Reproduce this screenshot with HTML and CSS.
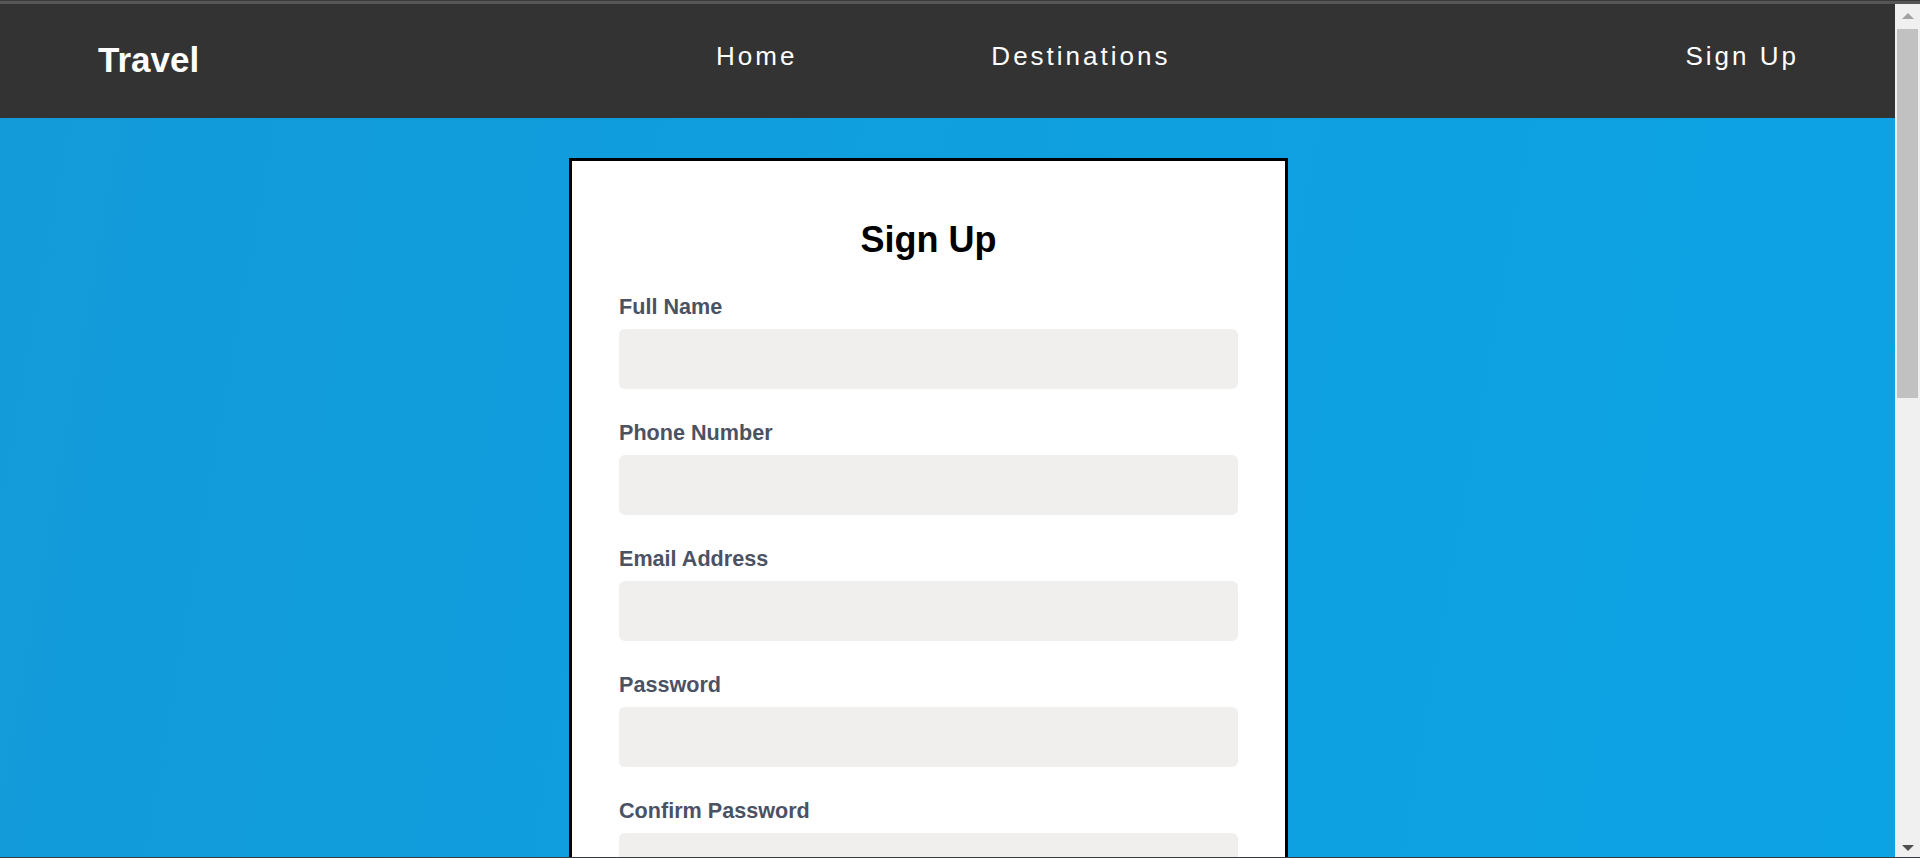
FILE: index.html
```html
<!DOCTYPE html>
<html lang="en">
<head>
<meta charset="utf-8">
<title>Travel - Sign Up</title>
<link rel="stylesheet" href="styles.css">
</head>
<body>
<div class="topline"></div>
<div class="window">
  <div class="page">
    <header class="header">
      <div class="logo">Travel</div>
      <ul class="links">
        <li><a href="#">Home</a></li>
        <li><a href="#">Destinations</a></li>
      </ul>
      <a class="signup-link" href="#">Sign Up</a>
    </header>
    <main class="hero">
      <form class="card">
        <h2 class="card-title">Sign Up</h2>
        <div class="field">
          <label class="field-label">Full Name</label>
          <input class="field-input" type="text">
        </div>
        <div class="field">
          <label class="field-label">Phone Number</label>
          <input class="field-input" type="text">
        </div>
        <div class="field">
          <label class="field-label">Email Address</label>
          <input class="field-input" type="text">
        </div>
        <div class="field">
          <label class="field-label">Password</label>
          <input class="field-input" type="password">
        </div>
        <div class="field">
          <label class="field-label">Confirm Password</label>
          <input class="field-input" type="password">
        </div>
      </form>
    </main>
  </div>
  <div class="scrollbar">
    <div class="sb-btn"><span class="arrow-up"></span></div>
    <div class="sb-track"><div class="sb-thumb"></div></div>
    <div class="sb-btn sb-btn-down"><span class="arrow-down"></span></div>
  </div>
</div>
<div class="bottomline"></div>
</body>
</html>
```
FILE: styles.css
```css
* { box-sizing: border-box; }
html, body {
  margin: 0;
  padding: 0;
  height: 858px;
  overflow: hidden;
  font-family: "Liberation Sans", Arial, sans-serif;
}
.topline {
  height: 4px;
  background: #565656;
  border-top: 1px solid #3a3a3a;
}
.window {
  display: flex;
  height: 853px;
}
.page {
  flex: 1;
  display: flex;
  flex-direction: column;
  overflow: hidden;
  background: linear-gradient(100deg, #139ad9 0%, #0f9fdf 50%, #0ca3e4 100%);
}
.header {
  flex: 0 0 114px;
  background: #333333;
  display: flex;
  align-items: flex-start;
  padding: 37px 99px 0 98px;
}
.logo {
  width: 618px;
  color: #ffffff;
  font-weight: bold;
  font-size: 35px;
  line-height: normal;
  margin-top: -1px;
}
.links {
  list-style: none;
  margin: 0;
  padding: 0;
  display: flex;
  gap: 194px;
}
.links a, .signup-link {
  color: #ffffff;
  text-decoration: none;
  font-size: 26px;
  letter-spacing: 3px;
  line-height: normal;
  display: block;
  margin-top: 0;
}
.signup-link { margin-left: auto; margin-right: -3px; }
.hero {
  flex: 1;
  display: flex;
  justify-content: center;
  align-items: flex-start;
  padding: 40px 38px 0 0;
}
.card {
  width: 719px;
  flex: 0 0 719px;
  background: #ffffff;
  border: 3px solid #000000;
  padding: 58px 47px 40px;
}
.card-title {
  margin: 0 0 33px;
  text-align: center;
  font-size: 36px;
  font-weight: bold;
  line-height: normal;
  color: #000000;
}
.field { margin-bottom: 31px; }
.field-label {
  display: block;
  font-size: 21.6px;
  font-weight: bold;
  color: #4a5263;
  line-height: normal;
  margin-bottom: 9px;
}
.field-input {
  display: block;
  width: 100%;
  height: 60px;
  border: none;
  border-radius: 6px;
  background: #f0efed;
  outline: none;
}
.scrollbar {
  flex: 0 0 25px;
  background: #f0f0f0;
  display: flex;
  flex-direction: column;
}
.sb-btn {
  flex: 0 0 25px;
  display: flex;
  align-items: center;
  justify-content: center;
  padding-bottom: 2px;
}
.sb-btn-down { padding-bottom: 0; padding-top: 6px; }
.sb-track {
  flex: 1;
  padding: 0 2px;
}
.sb-thumb {
  height: 369px;
  background: #c1c1c1;
}
.arrow-up {
  width: 0; height: 0;
  border-left: 6px solid transparent;
  border-right: 6px solid transparent;
  border-bottom: 6px solid #a3a3a3;
}
.arrow-down {
  width: 0; height: 0;
  border-left: 6px solid transparent;
  border-right: 6px solid transparent;
  border-top: 6px solid #505050;
}
.bottomline {
  height: 1px;
  background: #3a3a42;
}
```
